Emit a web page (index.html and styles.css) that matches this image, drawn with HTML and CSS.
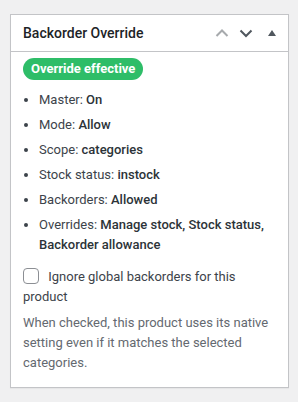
FILE: index.html
```html
<!DOCTYPE html>
<html lang="en">
<head>
    <meta charset="UTF-8">
    <meta name="viewport" content="width=device-width, initial-scale=1.0">
    <title>Backorder Override</title>
    <link rel="stylesheet" href="styles.css">
</head>
<body>

<div class="postbox">
    <div class="postbox-header">
        <h2>Backorder Override</h2>
        <div class="handle-actions">
            <button class="handle-btn up" aria-label="Move up">
                <svg width="16" height="16" viewBox="0 0 16 16"><path d="M2.5 11 L8 5.5 L13.5 11" fill="none" stroke="currentColor" stroke-width="2"/></svg>
            </button>
            <button class="handle-btn" aria-label="Move down">
                <svg width="16" height="16" viewBox="0 0 16 16"><path d="M2.5 5.5 L8 11 L13.5 5.5" fill="none" stroke="currentColor" stroke-width="2"/></svg>
            </button>
            <button class="handle-btn toggle" aria-label="Toggle panel">
                <svg width="10" height="8" viewBox="0 0 10 8"><path d="M1 7 L5 1 L9 7 Z" fill="currentColor"/></svg>
            </button>
        </div>
    </div>
    <div class="inside">
        <span class="badge">Override effective</span>
        <ul class="status-list">
            <li>Master: <strong>On</strong></li>
            <li>Mode: <strong>Allow</strong></li>
            <li>Scope: <strong>categories</strong></li>
            <li>Stock status: <strong>instock</strong></li>
            <li>Backorders: <strong>Allowed</strong></li>
            <li>Overrides: <strong>Manage stock, Stock status, Backorder allowance</strong></li>
        </ul>
        <label class="check-row" for="ignoreGlobal">
            <input type="checkbox" id="ignoreGlobal">
            Ignore global backorders for this product
        </label>
        <p class="description">When checked, this product uses its native setting even if it matches the selected categories.</p>
    </div>
</div>

</body>
</html>
```

FILE: styles.css
```css
body {
    font-family: Roboto, "Noto Sans", sans-serif;
    background-color: #f0f0f1;
    color: #3c434a;
    margin: 0;
    padding: 14px 9px 16px 10px;
    font-size: 13px;
}
.postbox {
    background: #ffffff;
    border: 1px solid #c3c4c7;
    box-shadow: 0 1px 1px rgba(0, 0, 0, 0.04);
}
.postbox-header {
    display: flex;
    align-items: center;
    justify-content: space-between;
    height: 36px;
    border-bottom: 1px solid #c3c4c7;
    padding-left: 12px;
}
.postbox-header h2 {
    margin: 0;
    font-size: 14px;
    font-weight: 500;
    color: #1d2327;
}
.handle-actions {
    display: flex;
    align-items: center;
    padding-right: 2px;
}
.handle-btn {
    background: none;
    border: none;
    padding: 0;
    width: 24px;
    height: 36px;
    display: flex;
    align-items: center;
    justify-content: center;
    color: #50575e;
    cursor: pointer;
}
.handle-btn.up {
    color: #a7aaad;
}
.handle-btn.toggle {
    width: 28px;
}
.inside {
    padding: 6px 12px 14px 12px;
}
.badge {
    display: inline-block;
    background: #2ebd68;
    color: #ffffff;
    font-weight: 700;
    font-size: 13px;
    line-height: 22px;
    padding: 0 8px;
    border-radius: 11px;
}
.status-list {
    list-style: disc;
    margin: 10px 0 12px 0;
    padding-left: 16px;
}
.status-list li {
    line-height: 20px;
    margin-bottom: 5px;
}
.status-list li strong {
    font-weight: 500;
    color: #2c3338;
}
.check-row {
    display: block;
    line-height: 20px;
}
.check-row input {
    width: 16px;
    height: 16px;
    margin: 0 6px 0 0;
    vertical-align: -3px;
    appearance: none;
    border: 1px solid #8c8f94;
    border-radius: 4px;
    background: #fff;
}
.description {
    margin: 6px 0 0 0;
    color: #646970;
    line-height: 20px;
}
```
